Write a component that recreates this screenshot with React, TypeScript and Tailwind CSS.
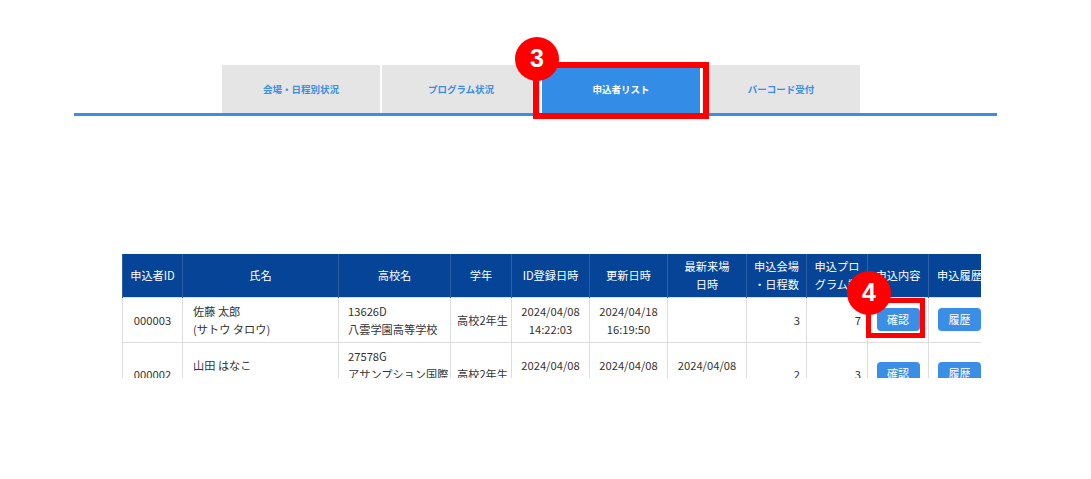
const tabs = ["会場・日程別状況", "プログラム状況", "申込者リスト", "バーコード受付"];

const cols = [60, 156, 112, 61, 78, 78, 79, 60, 61, 61, 62];

function Btn({ label }: { label: string }) {
  return (
    <button type="button" className="w-[43px] h-[23px] rounded-[4px] bg-[#3a8ee6] text-white text-[11px] leading-none">
      {label}
    </button>
  );
}

export default function App() {
  const th = "border-x border-[#2f5ea3] px-[4px] text-center align-middle font-normal";
  const td = "border border-[#dddddd] px-[6px] py-[4px] align-middle";

  return (
    <div className="w-[1091px] h-[479px] bg-white overflow-hidden text-[#333] [font-family:'Noto_Sans_CJK_JP','Noto_Sans',sans-serif]">
      {/* tabs */}
      <div className="ml-[74px] w-[923px] pt-[65px]">
        <div className="flex gap-[2px] pl-[148px]">
          {tabs.map((t, i) => (
            <div
              key={t}
              className={
                i == 2
                  ? "relative w-[158px] h-[48px] flex items-center justify-center bg-[#338ce6] text-white text-[9.5px] font-bold"
                  : "w-[158px] h-[48px] flex items-center justify-center bg-[#e5e5e5] text-[#3a8ee6] text-[9.5px] font-bold"
              }
            >
              {t}
              {i == 2 && (
                <>
                  <div className="absolute left-[-9px] right-[-9px] top-[-3px] bottom-[-6px] border-[6px] border-[#ff0000]" />
                  <div className="absolute left-[-27px] top-[-28px] w-[44px] h-[44px] rounded-full bg-[#ff0000] flex items-center justify-center text-white text-[25px] font-bold [font-family:'Liberation_Sans',sans-serif]">
                    3
                  </div>
                </>
              )}
            </div>
          ))}
        </div>
        <div className="h-[3px] bg-[#3a8ee6]" />
      </div>

      {/* table */}
      <div className="relative ml-[122px] mt-[138px] w-[859px]">
        <div className="h-[124px] overflow-hidden">
          <table className="table-fixed border-collapse w-[868px] text-[11.2px] leading-[18px]">
            <colgroup>
              {cols.map((w, i) => (
                <col key={i} style={{ width: w }} />
              ))}
            </colgroup>
            <thead>
              <tr className="h-[43px] bg-[#054496] text-white">
                <th className={th}>申込者ID</th>
                <th className={th}>氏名</th>
                <th className={th}>高校名</th>
                <th className={th}>学年</th>
                <th className={th}>ID登録日時</th>
                <th className={th}>更新日時</th>
                <th className={th}>最新来場<br />日時</th>
                <th className={th}>申込会場<br />・日程数</th>
                <th className={th}>申込プロ<br />グラム数</th>
                <th className={th}>申込内容</th>
                <th className={th + " whitespace-nowrap"}>申込履歴</th>
              </tr>
            </thead>
            <tbody>
              <tr>
                <td className={td + " text-center"}>000003</td>
                <td className={td + " pl-[10px]"}>佐藤 太郎<br />(サトウ タロウ)</td>
                <td className={td + " pl-[9px] pr-[1px] whitespace-nowrap"}>13626D<br />八雲学園高等学校</td>
                <td className={td + " text-center px-0 whitespace-nowrap"}>高校2年生</td>
                <td className={td + " text-center"}>2024/04/08<br />14:22:03</td>
                <td className={td + " text-center"}>2024/04/18<br />16:19:50</td>
                <td className={td + " text-center"}></td>
                <td className={td + " text-right"}>3</td>
                <td className={td + " text-right"}>7</td>
                <td className={td + " text-center"}><Btn label="確認" /></td>
                <td className={td + " text-center"}><Btn label="履歴" /></td>
              </tr>
              <tr>
                <td className={td + " text-center"}>000002</td>
                <td className={td + " pl-[10px]"}>山田 はなこ<br />(ヤマダ ハナコ)</td>
                <td className={td + " pl-[9px] pr-[1px] whitespace-nowrap"}>27578G<br />アサンプション国際<br />高等学校</td>
                <td className={td + " text-center px-0 whitespace-nowrap"}>高校2年生</td>
                <td className={td + " text-center"}>2024/04/08<br />10:05:41</td>
                <td className={td + " text-center"}>2024/04/08<br />10:05:41</td>
                <td className={td + " text-center"}>2024/04/08<br />11:32:17</td>
                <td className={td + " text-right"}>2</td>
                <td className={td + " text-right"}>3</td>
                <td className={td + " text-center"}><Btn label="確認" /></td>
                <td className={td + " text-center"}><Btn label="履歴" /></td>
              </tr>
            </tbody>
          </table>
        </div>
        {/* annotation 4 */}
        <div className="absolute left-[744px] top-[44px] w-[59px] h-[40px] border-[5px] border-[#ff0000]" />
        <div className="absolute left-[725px] top-[17px] w-[44px] h-[44px] rounded-full bg-[#ff0000] flex items-center justify-center text-white text-[25px] font-bold [font-family:'Liberation_Sans',sans-serif]">
          4
        </div>
      </div>
    </div>
  );
}
